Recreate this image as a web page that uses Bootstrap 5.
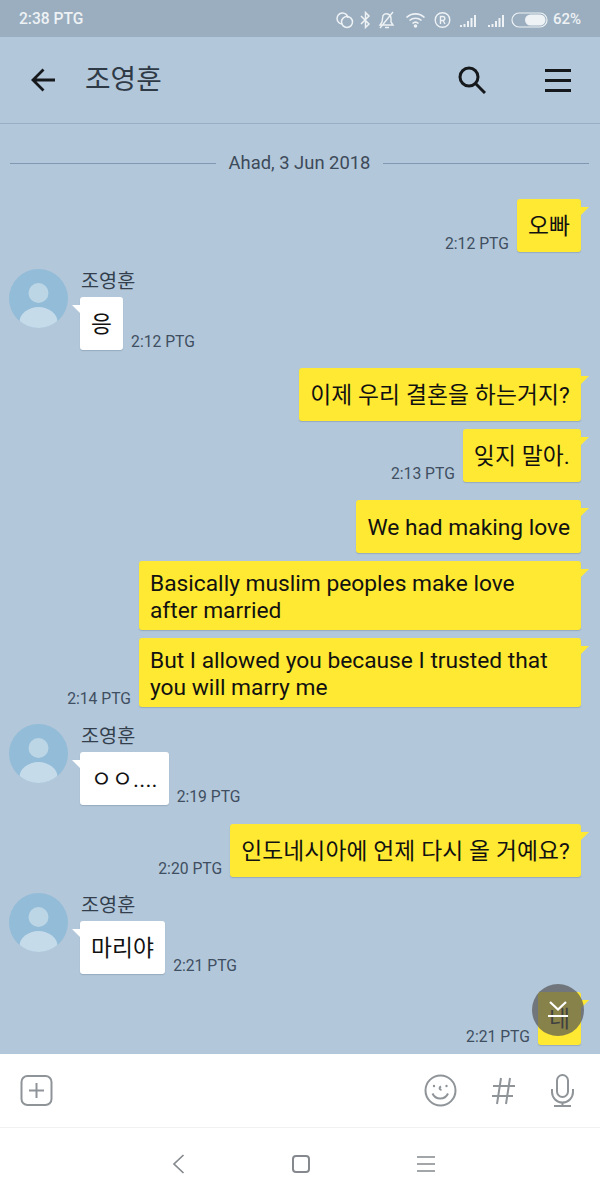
<!DOCTYPE html>
<html lang="ko">
<head>
  <meta charset="UTF-8" />
  <meta name="viewport" content="width=device-width, initial-scale=1.0" />
  <title>조영훈</title>
  <link href="https://cdn.jsdelivr.net/npm/bootstrap@5.3.0/dist/css/bootstrap.min.css" rel="stylesheet" />
  <style>
    body { width: 600px; height: 1200px; overflow: hidden; background: #fff; font-family: Roboto, "Noto Sans CJK KR", sans-serif; }
    .phone { width: 600px; height: 1200px; position: relative; }
    .status-bar { height: 37px; background: #9aaebf; color: #eef2f5; padding: 2px 19px 0; font-size: 15.6px; font-weight: 500; }
    .status-pct { font-size: 15px; margin-left: 5px; }
    .status-icons svg { display: block; }
    .chat-head { height: 87px; background: #b2c7da; border-bottom: 1px solid #97aec4; padding: 0 29px 0 31px; }
    .chat-title { font-size: 27.800px; color: #2f3a47; margin-left: 30px; }
    .head-tools { gap: 59px; }
    .chat-area { height: 930px; background: #b2c7da; overflow: hidden; padding: 0 19px 0 9px; }
    .date-row { height: 75px; padding: 3px 1px 0; color: #3d4a59; font-size: 18.400px; gap: 13px; margin-right: -9px; }
    .date-line { height: 1px; background: #8098b1; }
    .msg-time { font-size: 15.700px; color: #3f4e60; line-height: 18px; margin: 0 8px -1px 0; white-space: nowrap; }
    .msg-time-left { margin: 0 0 -1px 8px; }
    .bubble { position: relative; min-height: 53px; padding: 10px 11px 6px; font-size: 22.750px; line-height: 26.500px; color: #111; border-radius: 3px; display: flex; align-items: center; }
    .bubble-ko { letter-spacing: .13px; }
    .bubble-me { background: #ffe932; box-shadow: 0 1px 1px rgba(70,90,110,.25); }
    .bubble-me::after { content: ""; position: absolute; top: 8px; right: -8px; border-top: 9px solid #ffe932; border-right: 9px solid transparent; }
    .bubble-you { background: #fff; box-shadow: 0 1px 1px rgba(70,90,110,.25); }
    .bubble-you::before { content: ""; position: absolute; top: 8px; left: -8px; border-top: 9px solid #fff; border-left: 9px solid transparent; }
    .gap-small { margin-top: 8px; }
    .gap-big { margin-top: 18px; }
    .gap-wide { margin-top: 19px; }
    .you-row { margin-top: 17px; }
    .you-row-tight { margin-top: 16px; }
    .wide-bubble { width: 442px; }
    .avatar { width: 59px; height: 59px; flex: none; display: block; }
    .you-col { margin-left: 12px; }
    .you-name { font-size: 19.700px; line-height: 22px; color: #333f4d; padding: 2px 0 0 1px; margin-bottom: 4px; }
    .jump-btn { position: absolute; left: 532px; top: 984px; width: 52px; height: 52px; border-radius: 50%; background: rgba(84,84,84,.7); }
    .input-bar { height: 74px; background: #fff; border-bottom: 1px solid #f1f1f1; padding: 0 25px 0 20px; }
    .input-tools { gap: 35px; }
    .nav-bar { height: 72px; background: #fff; padding-left: 172px; gap: 107px; }
  </style>
</head>
<body>
  <div class="phone">

    <!-- status bar -->
    <div class="status-bar d-flex align-items-center justify-content-between">
      <span>2:38 PTG</span>
      <div class="status-icons d-flex align-items-center">
        <svg width="24" height="20" viewBox="0 0 24 20" fill="none" stroke="#eef2f5" stroke-width="1.5"><path d="M8.500 14a5.500 5.500 0 1 1 5.500-6"/><circle cx="13" cy="12" r="5.500"/></svg>
        <svg width="15" height="20" viewBox="0 0 15 20" fill="none" stroke="#eef2f5" stroke-width="1.5"><path d="M3 6l8 8-3.500 3.500V2.500L11 6l-8 8"/></svg>
        <svg width="20" height="20" viewBox="0 0 20 20" fill="none" stroke="#eef2f5" stroke-width="1.400" class="ms-1"><path d="M3 15h13l-2-3V8a4.500 4.500 0 0 0-8-2.500L5 12zM8 17.500h4M3 18L16 2"/></svg>
        <svg width="21" height="20" viewBox="0 0 21 20" fill="none" stroke="#eef2f5" stroke-width="1.600" class="ms-2"><path d="M1.500 7.500a13 13 0 0 1 18 0M4.500 10.500a9 9 0 0 1 12 0M7.500 13.500a4.500 4.500 0 0 1 6 0"/><circle cx="10.500" cy="16" r="1" fill="#eef2f5"/></svg>
        <svg width="17" height="20" viewBox="0 0 17 20" fill="none" stroke="#eef2f5" stroke-width="1.400" class="ms-2"><circle cx="8.500" cy="10" r="7.300"/><path d="M6.500 14V6.500h2.300a2 2 0 0 1 0 4H6.500M9 10.500l2 3.500"/></svg>
        <svg width="20" height="20" viewBox="0 0 20 20" fill="#eef2f5" class="ms-2"><rect x="1" y="15" width="2" height="2"/><rect x="4.500" y="14" width="2" height="3"/><rect x="8" y="11" width="2" height="6"/><rect x="11.500" y="8" width="2" height="9"/><rect x="15" y="5" width="2" height="12"/></svg>
        <svg width="20" height="20" viewBox="0 0 20 20" fill="#eef2f5" class="ms-2"><rect x="1" y="15" width="2" height="2"/><rect x="4.500" y="14" width="2" height="3"/><rect x="8" y="11" width="2" height="6"/><rect x="11.500" y="8" width="2" height="9"/><rect x="15" y="5" width="2" height="12"/></svg>
        <svg width="37" height="18" viewBox="0 0 37 18" fill="none" class="ms-1"><rect x="1" y="2" width="35" height="14" rx="7" stroke="#eef2f5" stroke-width="1.200"/><rect x="14" y="3.500" width="20.500" height="11" rx="5.500" fill="#eef2f5"/></svg>
        <span class="status-pct">62%</span>
      </div>
    </div>

    <!-- chat header -->
    <div class="chat-head d-flex align-items-center justify-content-between">
      <div class="d-flex align-items-center">
        <svg width="24" height="24" viewBox="0 0 24 24" fill="none" stroke="#16191c" stroke-width="2.800"><path d="M24 12H2M12.500 1.500L2 12l10.500 10.500"/></svg>
        <span class="chat-title">조영훈</span>
      </div>
      <div class="head-tools d-flex align-items-center">
        <svg width="28" height="28" viewBox="0 0 28 28" fill="none" stroke="#16191c" stroke-width="3"><circle cx="11" cy="11" r="9"/><path d="M17.500 17.500L27 27"/></svg>
        <svg width="26" height="24" viewBox="0 0 26 24" fill="#16191c"><rect y="1" width="26" height="3"/><rect y="11" width="26" height="3"/><rect y="21" width="26" height="3"/></svg>
      </div>
    </div>

    <!-- messages -->
    <div class="chat-area">
      <div class="date-row d-flex align-items-center">
        <div class="date-line flex-grow-1"></div>
        <span>Ahad, 3 Jun 2018</span>
        <div class="date-line flex-grow-1"></div>
      </div>

      <div class="d-flex justify-content-end align-items-end">
        <span class="msg-time">2:12 PTG</span>
        <div class="bubble bubble-me bubble-ko">오빠</div>
      </div>

      <div class="d-flex you-row">
        <svg class="avatar" viewBox="0 0 59 59"><defs><clipPath id="avclip1"><circle cx="29.500" cy="29.500" r="29.500"/></clipPath></defs><circle cx="29.500" cy="29.500" r="29.500" fill="#92bcd8"/><circle cx="29.500" cy="24" r="10" fill="#bcd6e6"/><ellipse cx="29.500" cy="53" rx="19" ry="15" fill="#c5dbe9" clip-path="url(#avclip1)"/></svg>
        <div class="you-col">
          <div class="you-name">조영훈</div>
          <div class="d-flex align-items-end">
            <div class="bubble bubble-you bubble-ko">응</div>
            <span class="msg-time msg-time-left">2:12 PTG</span>
          </div>
        </div>
      </div>

      <div class="d-flex justify-content-end gap-big">
        <div class="bubble bubble-me bubble-ko">이제 우리 결혼을 하는거지?</div>
      </div>
      <div class="d-flex justify-content-end align-items-end gap-small">
        <span class="msg-time">2:13 PTG</span>
        <div class="bubble bubble-me bubble-ko">잊지 말아.</div>
      </div>

      <div class="d-flex justify-content-end gap-big">
        <div class="bubble bubble-me">We had making love</div>
      </div>
      <div class="d-flex justify-content-end gap-small">
        <div class="bubble bubble-me wide-bubble">Basically muslim peoples make love<br />after married</div>
      </div>
      <div class="d-flex justify-content-end align-items-end gap-small">
        <span class="msg-time">2:14 PTG</span>
        <div class="bubble bubble-me wide-bubble">But I allowed you because I trusted that<br />you will marry me</div>
      </div>

      <div class="d-flex you-row">
        <svg class="avatar" viewBox="0 0 59 59"><defs><clipPath id="avclip2"><circle cx="29.500" cy="29.500" r="29.500"/></clipPath></defs><circle cx="29.500" cy="29.500" r="29.500" fill="#92bcd8"/><circle cx="29.500" cy="24" r="10" fill="#bcd6e6"/><ellipse cx="29.500" cy="53" rx="19" ry="15" fill="#c5dbe9" clip-path="url(#avclip2)"/></svg>
        <div class="you-col">
          <div class="you-name">조영훈</div>
          <div class="d-flex align-items-end">
            <div class="bubble bubble-you bubble-ko">ㅇㅇ....</div>
            <span class="msg-time msg-time-left">2:19 PTG</span>
          </div>
        </div>
      </div>

      <div class="d-flex justify-content-end align-items-end gap-wide">
        <span class="msg-time">2:20 PTG</span>
        <div class="bubble bubble-me bubble-ko">인도네시아에 언제 다시 올 거예요?</div>
      </div>

      <div class="d-flex you-row-tight">
        <svg class="avatar" viewBox="0 0 59 59"><defs><clipPath id="avclip3"><circle cx="29.500" cy="29.500" r="29.500"/></clipPath></defs><circle cx="29.500" cy="29.500" r="29.500" fill="#92bcd8"/><circle cx="29.500" cy="24" r="10" fill="#bcd6e6"/><ellipse cx="29.500" cy="53" rx="19" ry="15" fill="#c5dbe9" clip-path="url(#avclip3)"/></svg>
        <div class="you-col">
          <div class="you-name">조영훈</div>
          <div class="d-flex align-items-end">
            <div class="bubble bubble-you bubble-ko">마리야</div>
            <span class="msg-time msg-time-left">2:21 PTG</span>
          </div>
        </div>
      </div>

      <div class="d-flex justify-content-end align-items-end gap-big">
        <span class="msg-time">2:21 PTG</span>
        <div class="bubble bubble-me bubble-ko">네</div>
      </div>
    </div>

    <!-- jump to latest, floats over the chat -->
    <div class="jump-btn d-flex align-items-center justify-content-center">
      <svg width="24" height="24" viewBox="0 0 24 24" fill="none" stroke="#fff" stroke-width="2.200"><path d="M4 4l8 7.500L20 4M2 18h20"/></svg>
    </div>

    <!-- input bar -->
    <div class="input-bar d-flex align-items-center justify-content-between">
      <svg width="33" height="33" viewBox="0 0 33 33" fill="none" stroke="#8f9499" stroke-width="2"><rect x="1.500" y="2" width="30" height="29" rx="6"/><path d="M16.500 9v15M9 16.500h15"/></svg>
      <div class="input-tools d-flex align-items-center">
        <svg width="33" height="33" viewBox="0 0 33 33" fill="none" stroke="#8f9499" stroke-width="2"><circle cx="16.500" cy="16.500" r="15"/><circle cx="10" cy="12" r="1.200" fill="#8f9499" stroke="none"/><circle cx="22.500" cy="12" r="1.200" fill="#8f9499" stroke="none"/><path d="M8.500 19.500a8.500 8.500 0 0 0 15.500 0M17 12.500c-2 1-2 3 .5 3.500"/></svg>
        <svg width="23" height="28" viewBox="0 0 23 28" fill="none" stroke="#8f9499" stroke-width="2"><path d="M9 1L5 27M18 1l-4 26M1 9h22M0 19h21"/></svg>
        <svg width="25" height="33" viewBox="0 0 25 33" fill="none" stroke="#8f9499" stroke-width="2"><rect x="7" y="1" width="11" height="22" rx="5.500"/><path d="M2 15v3a10.500 10.500 0 0 0 21 0v-3M12.500 28.500V31M4 32h17"/></svg>
      </div>
    </div>

    <!-- android nav -->
    <div class="nav-bar d-flex align-items-center">
      <svg width="13" height="20" viewBox="0 0 13 20" fill="none" stroke="#85898d" stroke-width="1.700"><path d="M11.500 1L2 10l9.500 9"/></svg>
      <svg width="18" height="18" viewBox="0 0 18 18" fill="none" stroke="#85898d" stroke-width="2"><rect x="1" y="1" width="16" height="16" rx="3"/></svg>
      <svg width="18" height="18" viewBox="0 0 18 18" fill="none" stroke="#85898d" stroke-width="1.500"><path d="M0 2h18M0 9h18M0 16h18"/></svg>
    </div>

  </div>
</body>
</html>
